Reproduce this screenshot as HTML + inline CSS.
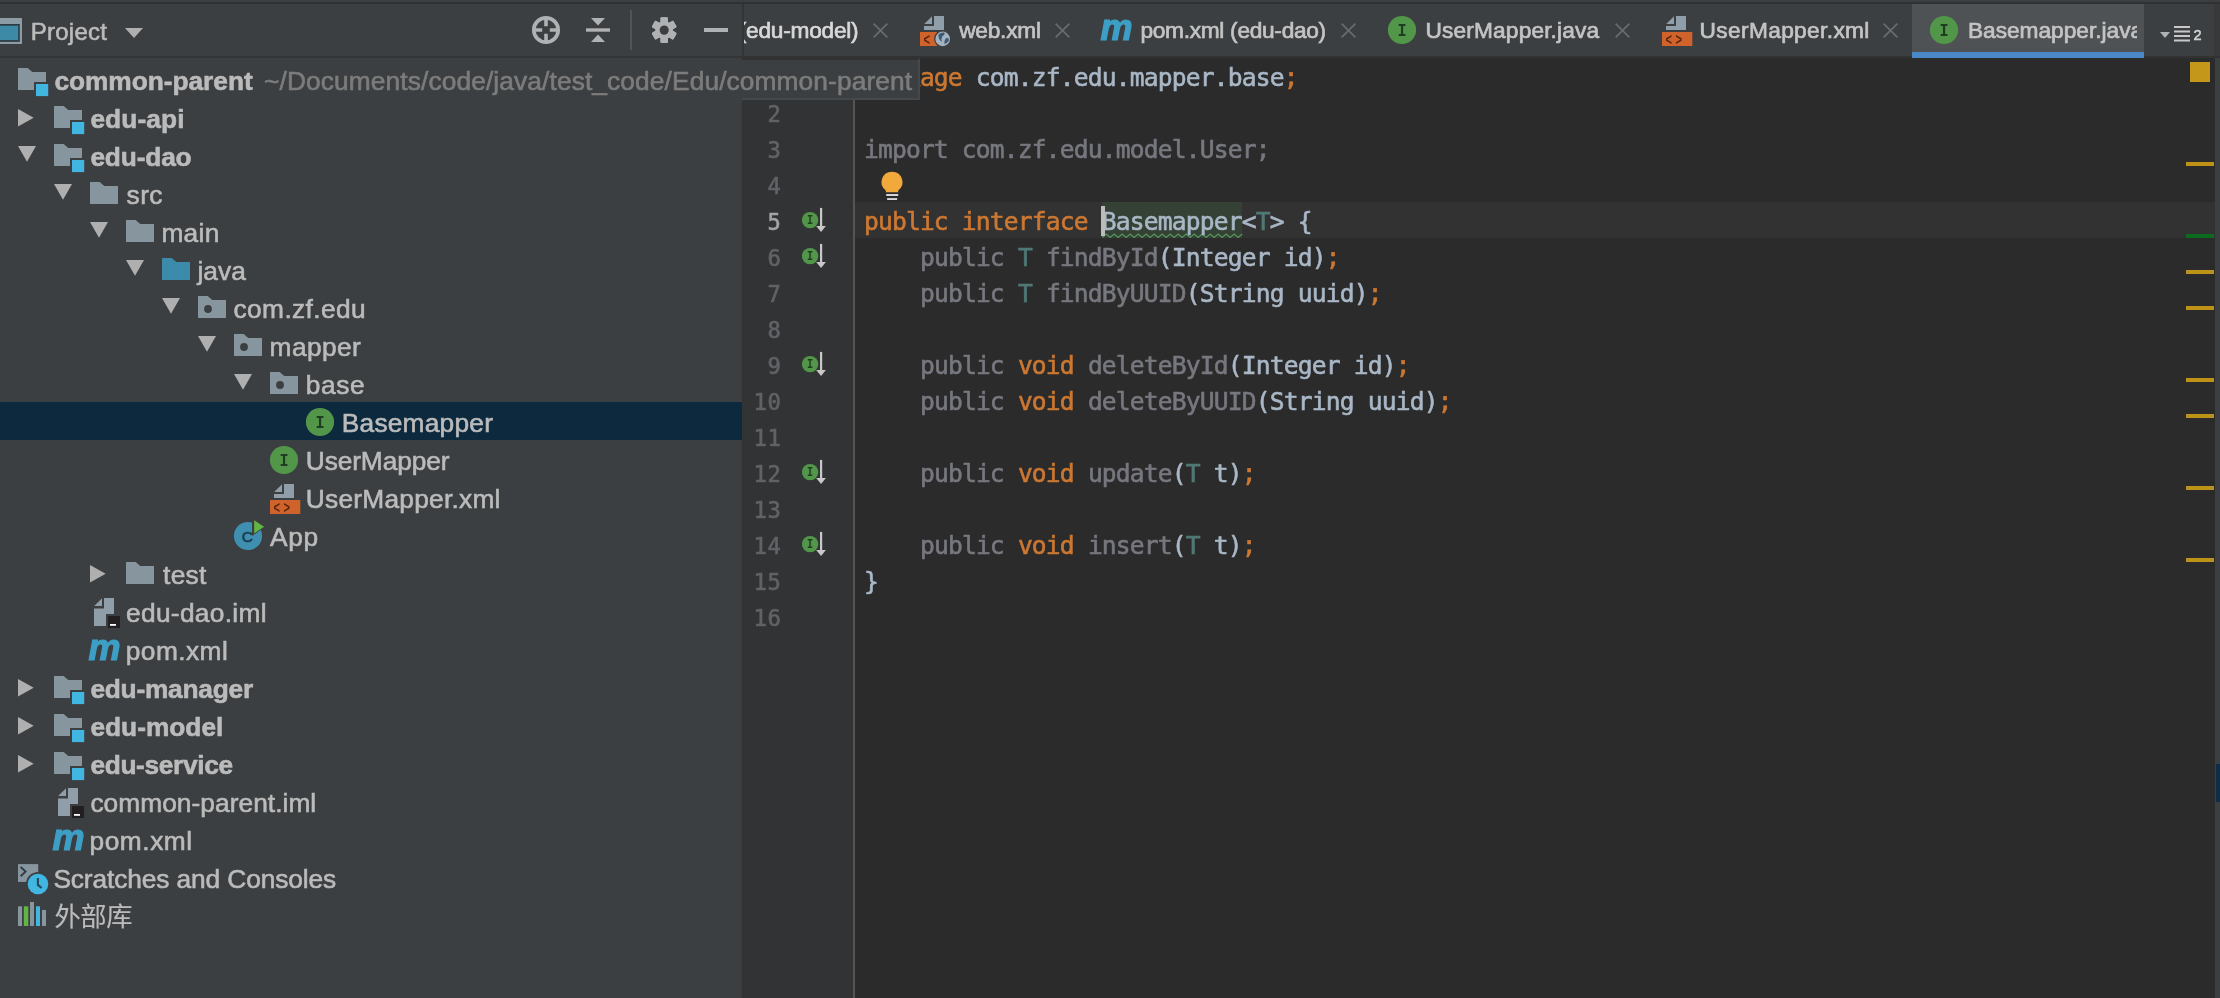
<!DOCTYPE html>
<html><head><meta charset="utf-8"><title>Project</title>
<style>
html,body{margin:0;padding:0;background:#2b2b2b;}
body{-webkit-text-stroke:0.6px currentColor;width:2220px;height:998px;position:relative;overflow:hidden;font-family:"Liberation Sans","Noto Sans CJK SC",sans-serif;color:#bbbbbb;}
#root{position:absolute;left:0;top:0;width:2220px;height:998px;will-change:transform;}
.ic{position:absolute;overflow:visible;}
.abs{position:absolute;}
.t{position:absolute;white-space:pre;font-size:26.3px;line-height:38px;height:38px;color:#bbbbbb;}
.b{font-weight:bold;}
.tab{position:absolute;white-space:pre;font-size:22.7px;line-height:30px;top:15px;color:#c4c4c4;-webkit-text-stroke:0.7px currentColor;}
.x{position:absolute;top:22.6px;margin-left:-0.4px;width:15px;height:15px;}
.code{position:absolute;left:863.9px;white-space:pre;font-family:"DejaVu Sans Mono","Liberation Mono",monospace;font-size:24.6px;letter-spacing:-0.81px;line-height:36px;height:36px;color:#a9b7c6;}
.ln{position:absolute;left:740.2px;width:41.4px;text-align:right;white-space:pre;font-family:"DejaVu Sans Mono","Liberation Mono",monospace;font-size:22.2px;letter-spacing:0.63px;line-height:36px;height:36px;color:#606366;}
.k{color:#cc7832;}
.g{color:#77787f;}
.tp{color:#507874;}
.mk{position:absolute;left:2186px;width:28px;height:4px;background:#be9117;}
</style></head><body><div id="root">

<div class="abs" style="left:0;top:0;width:742px;height:998px;background:#3c3f41"></div>
<div class="abs" style="left:742px;top:0;width:1478px;height:56px;background:#3c3f41"></div>
<div class="abs" style="left:0;top:2px;width:2220px;height:2px;background:#2f3133"></div>
<div class="abs" style="left:0;top:56px;width:742px;height:2px;background:#323436"></div>
<div class="abs" style="left:742px;top:56px;width:1478px;height:2px;background:#323232"></div>
<div class="abs" style="left:742px;top:4px;width:2px;height:54px;background:#323436"></div>
<svg class="ic" style="left:0px;top:16px" width="24" height="30" viewBox="0 0 24 30" ><rect x="-4" y="2" width="26" height="26" fill="#8d9ba5"/><rect x="-4" y="8" width="23.8" height="17.85" fill="#2e3a42"/><rect x="-4" y="9.7" width="22.2" height="14.4" fill="#3d8aa6"/></svg>
<div class="abs" id="proj" style="left:30.80px;letter-spacing:0.234px;top:17.3px;font-size:24px;line-height:30px;color:#bbbbbb;white-space:pre">Project</div>
<svg class="ic" style="left:125px;top:28px" width="20" height="12" viewBox="0 0 20 12" ><path d="M0,0 H18 L9,10 Z" fill="#afafaf"/></svg>
<svg class="ic" style="left:530px;top:15px" width="32" height="32" viewBox="0 0 32 32" ><circle cx="16" cy="15" r="12.2" fill="none" stroke="#afb1b3" stroke-width="3.7"/><path d="M16,2 V11.2 M16,18.8 V28 M3,15 H12.2 M19.8,15 H29" stroke="#afb1b3" stroke-width="3.6" fill="none"/></svg>
<svg class="ic" style="left:584px;top:15px" width="30" height="32" viewBox="0 0 30 32" ><path d="M7,3 H21 L14,10.5 Z M7,27 H21 L14,19.5 Z" fill="#afb1b3"/><rect x="2" y="13.3" width="24" height="3.4" fill="#afb1b3"/></svg>
<div class="abs" style="left:630px;top:10px;width:2px;height:40px;background:#515355"></div>
<svg class="ic" style="left:650px;top:15px" width="30" height="32" viewBox="0 0 30 32" ><g transform="translate(14.2,15.1) scale(0.95,0.98)" fill="#afb1b3"><rect x="-3.9" y="-13.1" width="7.8" height="26.2" rx="1.2" transform="rotate(0)"/><rect x="-3.9" y="-13.1" width="7.8" height="26.2" rx="1.2" transform="rotate(60)"/><rect x="-3.9" y="-13.1" width="7.8" height="26.2" rx="1.2" transform="rotate(120)"/><rect x="-3.9" y="-13.1" width="7.8" height="26.2" rx="1.2" transform="rotate(180)"/><rect x="-3.9" y="-13.1" width="7.8" height="26.2" rx="1.2" transform="rotate(240)"/><rect x="-3.9" y="-13.1" width="7.8" height="26.2" rx="1.2" transform="rotate(300)"/><circle r="9.4"/><circle r="4.8" fill="#3c3f41"/></g></svg>
<div class="abs" style="left:704px;top:27.5px;width:24.3px;height:4px;background:#afb1b3"></div>
<div class="abs" style="left:0;top:402px;width:742px;height:38px;background:#0d293e"></div>
<svg class="ic" style="left:16px;top:64px" width="34" height="36" viewBox="0 0 34 36" ><path d="M2,4 H11.7 L16.3,8 H30 V26 H2 Z" fill="#87959e"/><rect x="18" y="18" width="16" height="16" fill="#3c3f41"/><rect x="20" y="20" width="12.2" height="12.1" fill="#40b6e0"/></svg>
<div class="t b" id="r0" style="left:54.40px;letter-spacing:-0.035px;top:62px">common-parent</div>
<svg class="ic" style="left:18px;top:108.6px" width="18" height="20" viewBox="0 0 18 20" ><path d="M0,0 L15.7,8.8 L0,17.6 Z" fill="#afafaf"/></svg>
<svg class="ic" style="left:52px;top:102px" width="34" height="36" viewBox="0 0 34 36" ><path d="M2,4 H11.7 L16.3,8 H30 V26 H2 Z" fill="#87959e"/><rect x="18" y="18" width="16" height="16" fill="#3c3f41"/><rect x="20" y="20" width="12.2" height="12.1" fill="#40b6e0"/></svg>
<div class="t b" id="r1" style="left:90.40px;letter-spacing:0.101px;top:100px">edu-api</div>
<svg class="ic" style="left:18px;top:146.2px" width="20" height="18" viewBox="0 0 20 18" ><path d="M0,0 H18 L9,15.7 Z" fill="#afafaf"/></svg>
<svg class="ic" style="left:52px;top:140px" width="34" height="36" viewBox="0 0 34 36" ><path d="M2,4 H11.7 L16.3,8 H30 V26 H2 Z" fill="#87959e"/><rect x="18" y="18" width="16" height="16" fill="#3c3f41"/><rect x="20" y="20" width="12.2" height="12.1" fill="#40b6e0"/></svg>
<div class="t b" id="r2" style="left:90.40px;letter-spacing:-0.166px;top:138px">edu-dao</div>
<svg class="ic" style="left:54px;top:184.2px" width="20" height="18" viewBox="0 0 20 18" ><path d="M0,0 H18 L9,15.7 Z" fill="#afafaf"/></svg>
<svg class="ic" style="left:88px;top:178px" width="34" height="36" viewBox="0 0 34 36" ><path d="M2,4 H11.7 L16.3,8 H30 V26 H2 Z" fill="#87959e"/></svg>
<div class="t" id="r3" style="left:126.60px;letter-spacing:0.400px;top:176px">src</div>
<svg class="ic" style="left:90px;top:222.2px" width="20" height="18" viewBox="0 0 20 18" ><path d="M0,0 H18 L9,15.7 Z" fill="#afafaf"/></svg>
<svg class="ic" style="left:124px;top:216px" width="34" height="36" viewBox="0 0 34 36" ><path d="M2,4 H11.7 L16.3,8 H30 V26 H2 Z" fill="#87959e"/></svg>
<div class="t" id="r4" style="left:161.40px;letter-spacing:0.299px;top:214px">main</div>
<svg class="ic" style="left:126px;top:260.2px" width="20" height="18" viewBox="0 0 20 18" ><path d="M0,0 H18 L9,15.7 Z" fill="#afafaf"/></svg>
<svg class="ic" style="left:160px;top:254px" width="34" height="36" viewBox="0 0 34 36" ><path d="M2,4 H11.7 L16.3,8 H30 V26 H2 Z" fill="#3d8bab"/></svg>
<div class="t" id="r5" style="left:197.40px;letter-spacing:0.068px;top:252px">java</div>
<svg class="ic" style="left:162px;top:298.2px" width="20" height="18" viewBox="0 0 20 18" ><path d="M0,0 H18 L9,15.7 Z" fill="#afafaf"/></svg>
<svg class="ic" style="left:196px;top:292px" width="34" height="36" viewBox="0 0 34 36" ><path d="M2,4 H11.7 L16.3,8 H30 V26 H2 Z" fill="#87959e"/><circle cx="12" cy="17" r="3.9" fill="#3c3f41"/></svg>
<div class="t" id="r6" style="left:233.60px;letter-spacing:0.376px;top:290px">com.zf.edu</div>
<svg class="ic" style="left:198px;top:336.2px" width="20" height="18" viewBox="0 0 20 18" ><path d="M0,0 H18 L9,15.7 Z" fill="#afafaf"/></svg>
<svg class="ic" style="left:232px;top:330px" width="34" height="36" viewBox="0 0 34 36" ><path d="M2,4 H11.7 L16.3,8 H30 V26 H2 Z" fill="#87959e"/><circle cx="12" cy="17" r="3.9" fill="#3c3f41"/></svg>
<div class="t" id="r7" style="left:269.60px;letter-spacing:0.400px;top:328px">mapper</div>
<svg class="ic" style="left:234px;top:374.2px" width="20" height="18" viewBox="0 0 20 18" ><path d="M0,0 H18 L9,15.7 Z" fill="#afafaf"/></svg>
<svg class="ic" style="left:268px;top:368px" width="34" height="36" viewBox="0 0 34 36" ><path d="M2,4 H11.7 L16.3,8 H30 V26 H2 Z" fill="#87959e"/><circle cx="12" cy="17" r="3.9" fill="#3c3f41"/></svg>
<div class="t" id="r8" style="left:305.80px;letter-spacing:0.600px;top:366px">base</div>
<svg class="ic" style="left:304px;top:406px" width="32" height="32" viewBox="0 0 32 32" ><circle cx="16" cy="16" r="14.1" fill="#52964a"/><text transform="translate(16,21.8) scale(0.82,1)" text-anchor="middle" font-family="Liberation Mono, monospace" font-weight="bold" font-size="18.5" fill="#1f3d20">I</text></svg>
<div class="t" id="r9" style="left:341.80px;letter-spacing:0.222px;top:404px">Basemapper</div>
<svg class="ic" style="left:268px;top:444px" width="32" height="32" viewBox="0 0 32 32" ><circle cx="16" cy="16" r="14.1" fill="#52964a"/><text transform="translate(16,21.8) scale(0.82,1)" text-anchor="middle" font-family="Liberation Mono, monospace" font-weight="bold" font-size="18.5" fill="#1f3d20">I</text></svg>
<div class="t" id="r10" style="left:305.80px;letter-spacing:-0.111px;top:442px">UserMapper</div>
<svg class="ic" style="left:268px;top:480px" width="36" height="36" viewBox="0 0 36 36" ><path d="M16,4 H26 V18 H6 V14 H16 Z" fill="#8f9ea8"/><path d="M14,4.2 V12 H6.2 Z" fill="#8f9ea8"/><rect x="2" y="20" width="30.3" height="14" fill="#d0632b"/><text transform="translate(5.6,33) scale(0.66,1)" font-family="Liberation Sans, sans-serif" font-weight="bold" font-size="17" fill="#5a250b">&lt;</text><text transform="translate(15.4,33) scale(0.66,1)" font-family="Liberation Sans, sans-serif" font-weight="bold" font-size="17" fill="#5a250b">&gt;</text></svg>
<div class="t" id="r11" style="left:305.80px;letter-spacing:0.247px;top:480px">UserMapper.xml</div>
<svg class="ic" style="left:232px;top:520px" width="36" height="36" viewBox="0 0 36 36" ><circle cx="16" cy="16" r="14.1" fill="#3e8fb0"/><text x="15.4" y="21.5" text-anchor="middle" font-family="Liberation Sans, sans-serif" font-size="15.5" fill="#1d3f52" stroke="#1d3f52" stroke-width="0.7">C</text><path d="M20,-2.5 L33.5,6.8 L20,16 Z" fill="#3c3f41"/><path d="M22.2,0.3 L32.1,6.8 L22.2,13.5 Z" fill="#62b543"/></svg>
<div class="t" id="r12" style="left:270.00px;letter-spacing:0.700px;top:518px">App</div>
<svg class="ic" style="left:90px;top:564.6px" width="18" height="20" viewBox="0 0 18 20" ><path d="M0,0 L15.7,8.8 L0,17.6 Z" fill="#afafaf"/></svg>
<svg class="ic" style="left:124px;top:558px" width="34" height="36" viewBox="0 0 34 36" ><path d="M2,4 H11.7 L16.3,8 H30 V26 H2 Z" fill="#87959e"/></svg>
<div class="t" id="r13" style="left:163.00px;letter-spacing:0.333px;top:556px">test</div>
<svg class="ic" style="left:88px;top:594px" width="36" height="36" viewBox="0 0 36 36" ><path d="M16,4 H26 V32 H6 V14.6 H16 Z" fill="#8f9ea8"/><path d="M14,4.2 V12 H6.2 Z" fill="#8f9ea8"/><rect x="18" y="20" width="16" height="16" fill="#3c3f41"/><rect x="20" y="22" width="12" height="12" fill="#231f20"/><rect x="22" y="30" width="6" height="1.8" fill="#ffffff"/></svg>
<div class="t" id="r14" style="left:126.00px;letter-spacing:0.320px;top:594px">edu-dao.iml</div>
<svg class="ic" style="left:88px;top:634px" width="40" height="36" viewBox="0 0 40 36" ><text x="0.6" y="26" font-family="Liberation Sans, sans-serif" font-weight="bold" font-style="italic" font-size="36" fill="#3d9fc6" stroke="#3d9fc6" stroke-width="1.2">m</text></svg>
<div class="t" id="r15" style="left:125.80px;letter-spacing:0.434px;top:632px">pom.xml</div>
<svg class="ic" style="left:18px;top:678.6px" width="18" height="20" viewBox="0 0 18 20" ><path d="M0,0 L15.7,8.8 L0,17.6 Z" fill="#afafaf"/></svg>
<svg class="ic" style="left:52px;top:672px" width="34" height="36" viewBox="0 0 34 36" ><path d="M2,4 H11.7 L16.3,8 H30 V26 H2 Z" fill="#87959e"/><rect x="18" y="18" width="16" height="16" fill="#3c3f41"/><rect x="20" y="20" width="12.2" height="12.1" fill="#40b6e0"/></svg>
<div class="t b" id="r16" style="left:90.40px;letter-spacing:-0.240px;top:670px">edu-manager</div>
<svg class="ic" style="left:18px;top:716.6px" width="18" height="20" viewBox="0 0 18 20" ><path d="M0,0 L15.7,8.8 L0,17.6 Z" fill="#afafaf"/></svg>
<svg class="ic" style="left:52px;top:710px" width="34" height="36" viewBox="0 0 34 36" ><path d="M2,4 H11.7 L16.3,8 H30 V26 H2 Z" fill="#87959e"/><rect x="18" y="18" width="16" height="16" fill="#3c3f41"/><rect x="20" y="20" width="12.2" height="12.1" fill="#40b6e0"/></svg>
<div class="t b" id="r17" style="left:90.40px;letter-spacing:-0.001px;top:708px">edu-model</div>
<svg class="ic" style="left:18px;top:754.6px" width="18" height="20" viewBox="0 0 18 20" ><path d="M0,0 L15.7,8.8 L0,17.6 Z" fill="#afafaf"/></svg>
<svg class="ic" style="left:52px;top:748px" width="34" height="36" viewBox="0 0 34 36" ><path d="M2,4 H11.7 L16.3,8 H30 V26 H2 Z" fill="#87959e"/><rect x="18" y="18" width="16" height="16" fill="#3c3f41"/><rect x="20" y="20" width="12.2" height="12.1" fill="#40b6e0"/></svg>
<div class="t b" id="r18" style="left:90.40px;letter-spacing:-0.340px;top:746px">edu-service</div>
<svg class="ic" style="left:52px;top:784px" width="36" height="36" viewBox="0 0 36 36" ><path d="M16,4 H26 V32 H6 V14.6 H16 Z" fill="#8f9ea8"/><path d="M14,4.2 V12 H6.2 Z" fill="#8f9ea8"/><rect x="18" y="20" width="16" height="16" fill="#3c3f41"/><rect x="20" y="22" width="12" height="12" fill="#231f20"/><rect x="22" y="30" width="6" height="1.8" fill="#ffffff"/></svg>
<div class="t" id="r19" style="left:90.40px;letter-spacing:0.048px;top:784px">common-parent.iml</div>
<svg class="ic" style="left:52px;top:824px" width="40" height="36" viewBox="0 0 40 36" ><text x="0.6" y="26" font-family="Liberation Sans, sans-serif" font-weight="bold" font-style="italic" font-size="36" fill="#3d9fc6" stroke="#3d9fc6" stroke-width="1.2">m</text></svg>
<div class="t" id="r20" style="left:89.50px;letter-spacing:0.551px;top:822px">pom.xml</div>
<svg class="ic" style="left:16px;top:862px" width="36" height="36" viewBox="0 0 36 36" ><rect x="2" y="2.1" width="20.2" height="17.8" fill="#87959e"/><path d="M4.6,5 L9.6,9.6 L4.6,14.2" fill="none" stroke="#313c44" stroke-width="1.9"/><circle cx="22" cy="22" r="12" fill="#3c3f41"/><circle cx="22" cy="22" r="10.3" fill="#40b6e0"/><path d="M21.9,16 V22.9 L25.6,26" fill="none" stroke="#25475a" stroke-width="2.1"/></svg>
<div class="t" id="r21" style="left:53.40px;letter-spacing:-0.108px;top:860px">Scratches and Consoles</div>
<svg class="ic" style="left:16px;top:900px" width="36" height="36" viewBox="0 0 36 36" ><rect x="2" y="6.3" width="4" height="19.7" fill="#87959e"/><rect x="7.8" y="6.3" width="4.5" height="19.7" fill="#62b543"/><rect x="14" y="2" width="4" height="24" fill="#87959e"/><rect x="20" y="6.3" width="4" height="19.7" fill="#40b6e0"/><rect x="26" y="10" width="4" height="16" fill="#87959e"/></svg>
<div class="t" id="r22" style="left:54.40px;letter-spacing:-0.400px;top:898px;-webkit-text-stroke:0.15px currentColor">外部库</div>
<div class="abs" style="left:742px;top:58px;width:111px;height:940px;background:#313335"></div>
<div class="abs" style="left:853px;top:60px;width:2px;height:938px;background:#555555"></div>
<div class="abs" style="left:855px;top:202px;width:1360px;height:36px;background:#323232"></div>
<div class="abs" style="left:2215px;top:58px;width:5px;height:940px;background:#3c3f41"></div>
<div class="abs" style="left:2216px;top:764px;width:4px;height:38px;background:#0f2d47"></div>
<div class="abs" style="left:2190px;top:62px;width:20px;height:20px;background:#c4961a"></div>
<div class="mk" style="top:162px"></div>
<div class="mk" style="top:270px"></div>
<div class="mk" style="top:306px"></div>
<div class="mk" style="top:378px"></div>
<div class="mk" style="top:414px"></div>
<div class="mk" style="top:486px"></div>
<div class="mk" style="top:558px"></div>
<div class="mk" style="top:234px;background:#0a6b1f"></div>
<div class="ln" style="top:96px">2</div>
<div class="ln" style="top:132px">3</div>
<div class="ln" style="top:168px">4</div>
<div class="ln" style="top:204px;color:#a4a3a3">5</div>
<div class="ln" style="top:240px">6</div>
<div class="ln" style="top:276px">7</div>
<div class="ln" style="top:312px">8</div>
<div class="ln" style="top:348px">9</div>
<div class="ln" style="top:384px">10</div>
<div class="ln" style="top:420px">11</div>
<div class="ln" style="top:456px">12</div>
<div class="ln" style="top:492px">13</div>
<div class="ln" style="top:528px">14</div>
<div class="ln" style="top:564px">15</div>
<div class="ln" style="top:600px">16</div>
<svg class="ic" style="left:800px;top:206px" width="30" height="30" viewBox="0 0 30 30" ><circle cx="10.1" cy="14.1" r="8.2" fill="#52964a"/><text transform="translate(10.1,18.2) scale(0.85,1)" text-anchor="middle" font-family="Liberation Mono, monospace" font-weight="bold" font-size="12" fill="#1f3d20">I</text><path d="M21.1,1.9 V22" stroke="#c8c8c8" stroke-width="2.2" fill="none"/><path d="M16.2,19.9 H25.9 L21.05,25.9 Z" fill="#c8c8c8"/></svg>
<svg class="ic" style="left:800px;top:242px" width="30" height="30" viewBox="0 0 30 30" ><circle cx="10.1" cy="14.1" r="8.2" fill="#52964a"/><text transform="translate(10.1,18.2) scale(0.85,1)" text-anchor="middle" font-family="Liberation Mono, monospace" font-weight="bold" font-size="12" fill="#1f3d20">I</text><path d="M21.1,1.9 V22" stroke="#c8c8c8" stroke-width="2.2" fill="none"/><path d="M16.2,19.9 H25.9 L21.05,25.9 Z" fill="#c8c8c8"/></svg>
<svg class="ic" style="left:800px;top:350px" width="30" height="30" viewBox="0 0 30 30" ><circle cx="10.1" cy="14.1" r="8.2" fill="#52964a"/><text transform="translate(10.1,18.2) scale(0.85,1)" text-anchor="middle" font-family="Liberation Mono, monospace" font-weight="bold" font-size="12" fill="#1f3d20">I</text><path d="M21.1,1.9 V22" stroke="#c8c8c8" stroke-width="2.2" fill="none"/><path d="M16.2,19.9 H25.9 L21.05,25.9 Z" fill="#c8c8c8"/></svg>
<svg class="ic" style="left:800px;top:458px" width="30" height="30" viewBox="0 0 30 30" ><circle cx="10.1" cy="14.1" r="8.2" fill="#52964a"/><text transform="translate(10.1,18.2) scale(0.85,1)" text-anchor="middle" font-family="Liberation Mono, monospace" font-weight="bold" font-size="12" fill="#1f3d20">I</text><path d="M21.1,1.9 V22" stroke="#c8c8c8" stroke-width="2.2" fill="none"/><path d="M16.2,19.9 H25.9 L21.05,25.9 Z" fill="#c8c8c8"/></svg>
<svg class="ic" style="left:800px;top:530px" width="30" height="30" viewBox="0 0 30 30" ><circle cx="10.1" cy="14.1" r="8.2" fill="#52964a"/><text transform="translate(10.1,18.2) scale(0.85,1)" text-anchor="middle" font-family="Liberation Mono, monospace" font-weight="bold" font-size="12" fill="#1f3d20">I</text><path d="M21.1,1.9 V22" stroke="#c8c8c8" stroke-width="2.2" fill="none"/><path d="M16.2,19.9 H25.9 L21.05,25.9 Z" fill="#c8c8c8"/></svg>
<svg class="ic" style="left:878px;top:170px" width="28" height="32" viewBox="0 0 28 32" ><path d="M14,1.7 a10.4,10.4 0 0 1 6.2,18.8 v1.8 h-12.4 v-1.8 A10.4,10.4 0 0 1 14,1.7 Z" fill="#f2a93b"/><rect x="8.2" y="24" width="12" height="2" fill="#d6d6d6"/><rect x="9.1" y="28.1" width="10" height="1.9" fill="#d6d6d6"/></svg>
<div class="abs" style="left:1102.2px;top:202px;width:140.1px;height:36px;background:#344134"></div>
<svg class="ic" style="left:0;top:0" width="2220" height="998"><polyline points="1102.2,237.4 1106.2,234.0 1110.2,237.4 1114.2,234.0 1118.2,237.4 1122.2,234.0 1126.2,237.4 1130.2,234.0 1134.2,237.4 1138.2,234.0 1142.2,237.4 1146.2,234.0 1150.2,237.4 1154.2,234.0 1158.2,237.4 1162.2,234.0 1166.2,237.4 1170.2,234.0 1174.2,237.4 1178.2,234.0 1182.2,237.4 1186.2,234.0 1190.2,237.4 1194.2,234.0 1198.2,237.4 1202.2,234.0 1206.2,237.4 1210.2,234.0 1214.2,237.4 1218.2,234.0 1222.2,237.4 1226.2,234.0 1230.2,237.4 1234.2,234.0 1238.2,237.4 1242.2,234.0" fill="none" stroke="#55965f" stroke-width="1.3"/></svg>
<div class="code" id="c1" style="top:60px"><span class="k">package</span> com.zf.edu.mapper.base<span class="k">;</span></div>
<div class="code" id="c3" style="top:132px"><span class="g">import com.zf.edu.model.User;</span></div>
<div class="code" id="c5" style="top:204px"><span class="k">public interface</span> Basemapper&lt;<span class="tp">T</span>&gt; {</div>
<div class="code" id="c6" style="top:240px">    <span class="g">public</span> <span class="tp">T</span> <span class="g">findById</span>(Integer id)<span class="k">;</span></div>
<div class="code" id="c7" style="top:276px">    <span class="g">public</span> <span class="tp">T</span> <span class="g">findByUUID</span>(String uuid)<span class="k">;</span></div>
<div class="code" id="c9" style="top:348px">    <span class="g">public</span> <span class="k">void</span> <span class="g">deleteById</span>(Integer id)<span class="k">;</span></div>
<div class="code" id="c10" style="top:384px">    <span class="g">public</span> <span class="k">void</span> <span class="g">deleteByUUID</span>(String uuid)<span class="k">;</span></div>
<div class="code" id="c12" style="top:456px">    <span class="g">public</span> <span class="k">void</span> <span class="g">update</span>(<span class="tp">T</span> t)<span class="k">;</span></div>
<div class="code" id="c14" style="top:528px">    <span class="g">public</span> <span class="k">void</span> <span class="g">insert</span>(<span class="tp">T</span> t)<span class="k">;</span></div>
<div class="code" id="c15" style="top:564px">}</div>
<div class="abs" style="left:1101px;top:206px;width:3.6px;height:29.6px;background:#bbbbbb"></div>
<div class="abs" style="left:742px;top:58px;width:176px;height:38px;background:#3c3f41;border-top:2px solid #313131;border-right:2px solid #46494b;border-bottom:2px solid #46494b"></div>
<div class="abs" style="left:0;top:60px;width:918px;height:38px;overflow:hidden"><div class="t" id="path" style="left:264.10px;letter-spacing:0.116px;top:2px;color:#7c7c7c;">~/Documents/code/java/test_code/Edu/common-parent</div></div>
<div class="abs" style="left:1912px;top:4px;width:232px;height:48px;background:#4e5254"></div>
<div class="abs" style="left:1912px;top:52px;width:232px;height:6px;background:#4a88c7"></div>
<div class="abs" style="left:744px;top:4px;width:130px;height:50px;overflow:hidden"><div class="tab" id="t0" style="left:-5.20px;top:11px;letter-spacing:-0.25px;color:#d8d8d8">(edu-model)</div></div>
<svg class="x" style="left:873px" viewBox="0 0 15 15"><path d="M0.6,0.6 L14.4,14.4 M14.4,0.6 L0.6,14.4" stroke="#686c6f" stroke-width="1.7" fill="none"/></svg>
<svg class="ic" style="left:918px;top:12px" width="36" height="36" viewBox="0 0 36 36" ><path d="M16,4 H26 V18 H6 V14 H16 Z" fill="#8f9ea8"/><path d="M14,4.2 V12 H6.2 Z" fill="#8f9ea8"/><rect x="2" y="20" width="17" height="14" fill="#d0632b"/><text transform="translate(5.6,33) scale(0.66,1)" font-family="Liberation Sans, sans-serif" font-weight="bold" font-size="17" fill="#5a250b">&lt;</text><circle cx="24.7" cy="26.9" r="8.6" fill="#3c3f41"/><circle cx="24.7" cy="26.9" r="7.3" fill="#a3b3c0"/><path d="M20.5,22.5 q3,-2.5 6,-2 q0.5,2.5 -2,3.5 q-2,3 -0.5,6 q-4,-2.5 -3.5,-7.5 Z M28,26 q3,-0.5 3,2 q-1.5,3.5 -4.5,4 q-0.5,-3.5 1.5,-6 Z" fill="#3f5a70"/></svg>
<div class="tab" id="t1" style="left:959.20px;letter-spacing:-0.232px;">web.xml</div>
<svg class="x" style="left:1055px" viewBox="0 0 15 15"><path d="M0.6,0.6 L14.4,14.4 M14.4,0.6 L0.6,14.4" stroke="#686c6f" stroke-width="1.7" fill="none"/></svg>
<svg class="ic" style="left:1100px;top:12px" width="40" height="36" viewBox="0 0 40 36" ><text x="0.6" y="27.6" font-family="Liberation Sans, sans-serif" font-weight="bold" font-style="italic" font-size="36" fill="#3d9fc6" stroke="#3d9fc6" stroke-width="1.2">m</text></svg>
<div class="tab" id="t2" style="left:1140.40px;letter-spacing:-0.288px;">pom.xml (edu-dao)</div>
<svg class="x" style="left:1341px" viewBox="0 0 15 15"><path d="M0.6,0.6 L14.4,14.4 M14.4,0.6 L0.6,14.4" stroke="#686c6f" stroke-width="1.7" fill="none"/></svg>
<svg class="ic" style="left:1386px;top:14px" width="32" height="32" viewBox="0 0 32 32" ><circle cx="16" cy="16" r="14.1" fill="#52964a"/><text transform="translate(16,21.8) scale(0.82,1)" text-anchor="middle" font-family="Liberation Mono, monospace" font-weight="bold" font-size="18.5" fill="#1f3d20">I</text></svg>
<div class="tab" id="t3" style="left:1425.60px;letter-spacing:0.143px;">UserMapper.java</div>
<svg class="x" style="left:1615px" viewBox="0 0 15 15"><path d="M0.6,0.6 L14.4,14.4 M14.4,0.6 L0.6,14.4" stroke="#686c6f" stroke-width="1.7" fill="none"/></svg>
<svg class="ic" style="left:1660px;top:12px" width="36" height="36" viewBox="0 0 36 36" ><path d="M16,4 H26 V18 H6 V14 H16 Z" fill="#8f9ea8"/><path d="M14,4.2 V12 H6.2 Z" fill="#8f9ea8"/><rect x="2" y="20" width="30.3" height="14" fill="#d0632b"/><text transform="translate(5.6,33) scale(0.66,1)" font-family="Liberation Sans, sans-serif" font-weight="bold" font-size="17" fill="#5a250b">&lt;</text><text transform="translate(15.4,33) scale(0.66,1)" font-family="Liberation Sans, sans-serif" font-weight="bold" font-size="17" fill="#5a250b">&gt;</text></svg>
<div class="tab" id="t4" style="left:1699.60px;letter-spacing:0.356px;">UserMapper.xml</div>
<svg class="x" style="left:1883px" viewBox="0 0 15 15"><path d="M0.6,0.6 L14.4,14.4 M14.4,0.6 L0.6,14.4" stroke="#686c6f" stroke-width="1.7" fill="none"/></svg>
<svg class="ic" style="left:1928px;top:14px" width="32" height="32" viewBox="0 0 32 32" ><circle cx="16" cy="16" r="14.1" fill="#52964a"/><text transform="translate(16,21.8) scale(0.82,1)" text-anchor="middle" font-family="Liberation Mono, monospace" font-weight="bold" font-size="18.5" fill="#1f3d20">I</text></svg>
<div class="tab" id="t5" style="left:1967.90px;width:168.7px;overflow:hidden">Basemapper.java</div>
<svg class="ic" style="left:2158px;top:26px" width="50" height="20" viewBox="0 0 50 20" ><path d="M2,6 H12 L7,12 Z" fill="#afb1b3"/><rect x="16" y="0" width="16" height="2" fill="#c8c8c8"/><rect x="16" y="4.5" width="16" height="2" fill="#c8c8c8"/><rect x="16" y="9" width="16" height="2" fill="#c8c8c8"/><rect x="16" y="13.5" width="16" height="2" fill="#c8c8c8"/></svg>
<div class="abs" id="tl" style="left:2193.4px;top:24.3px;font-size:14.5px;line-height:22px;color:#d0d0d0">2</div>
<div class="abs" style="left:2214px;top:4px;width:6px;height:52px;background:#37393b"></div>
</div></body></html>
